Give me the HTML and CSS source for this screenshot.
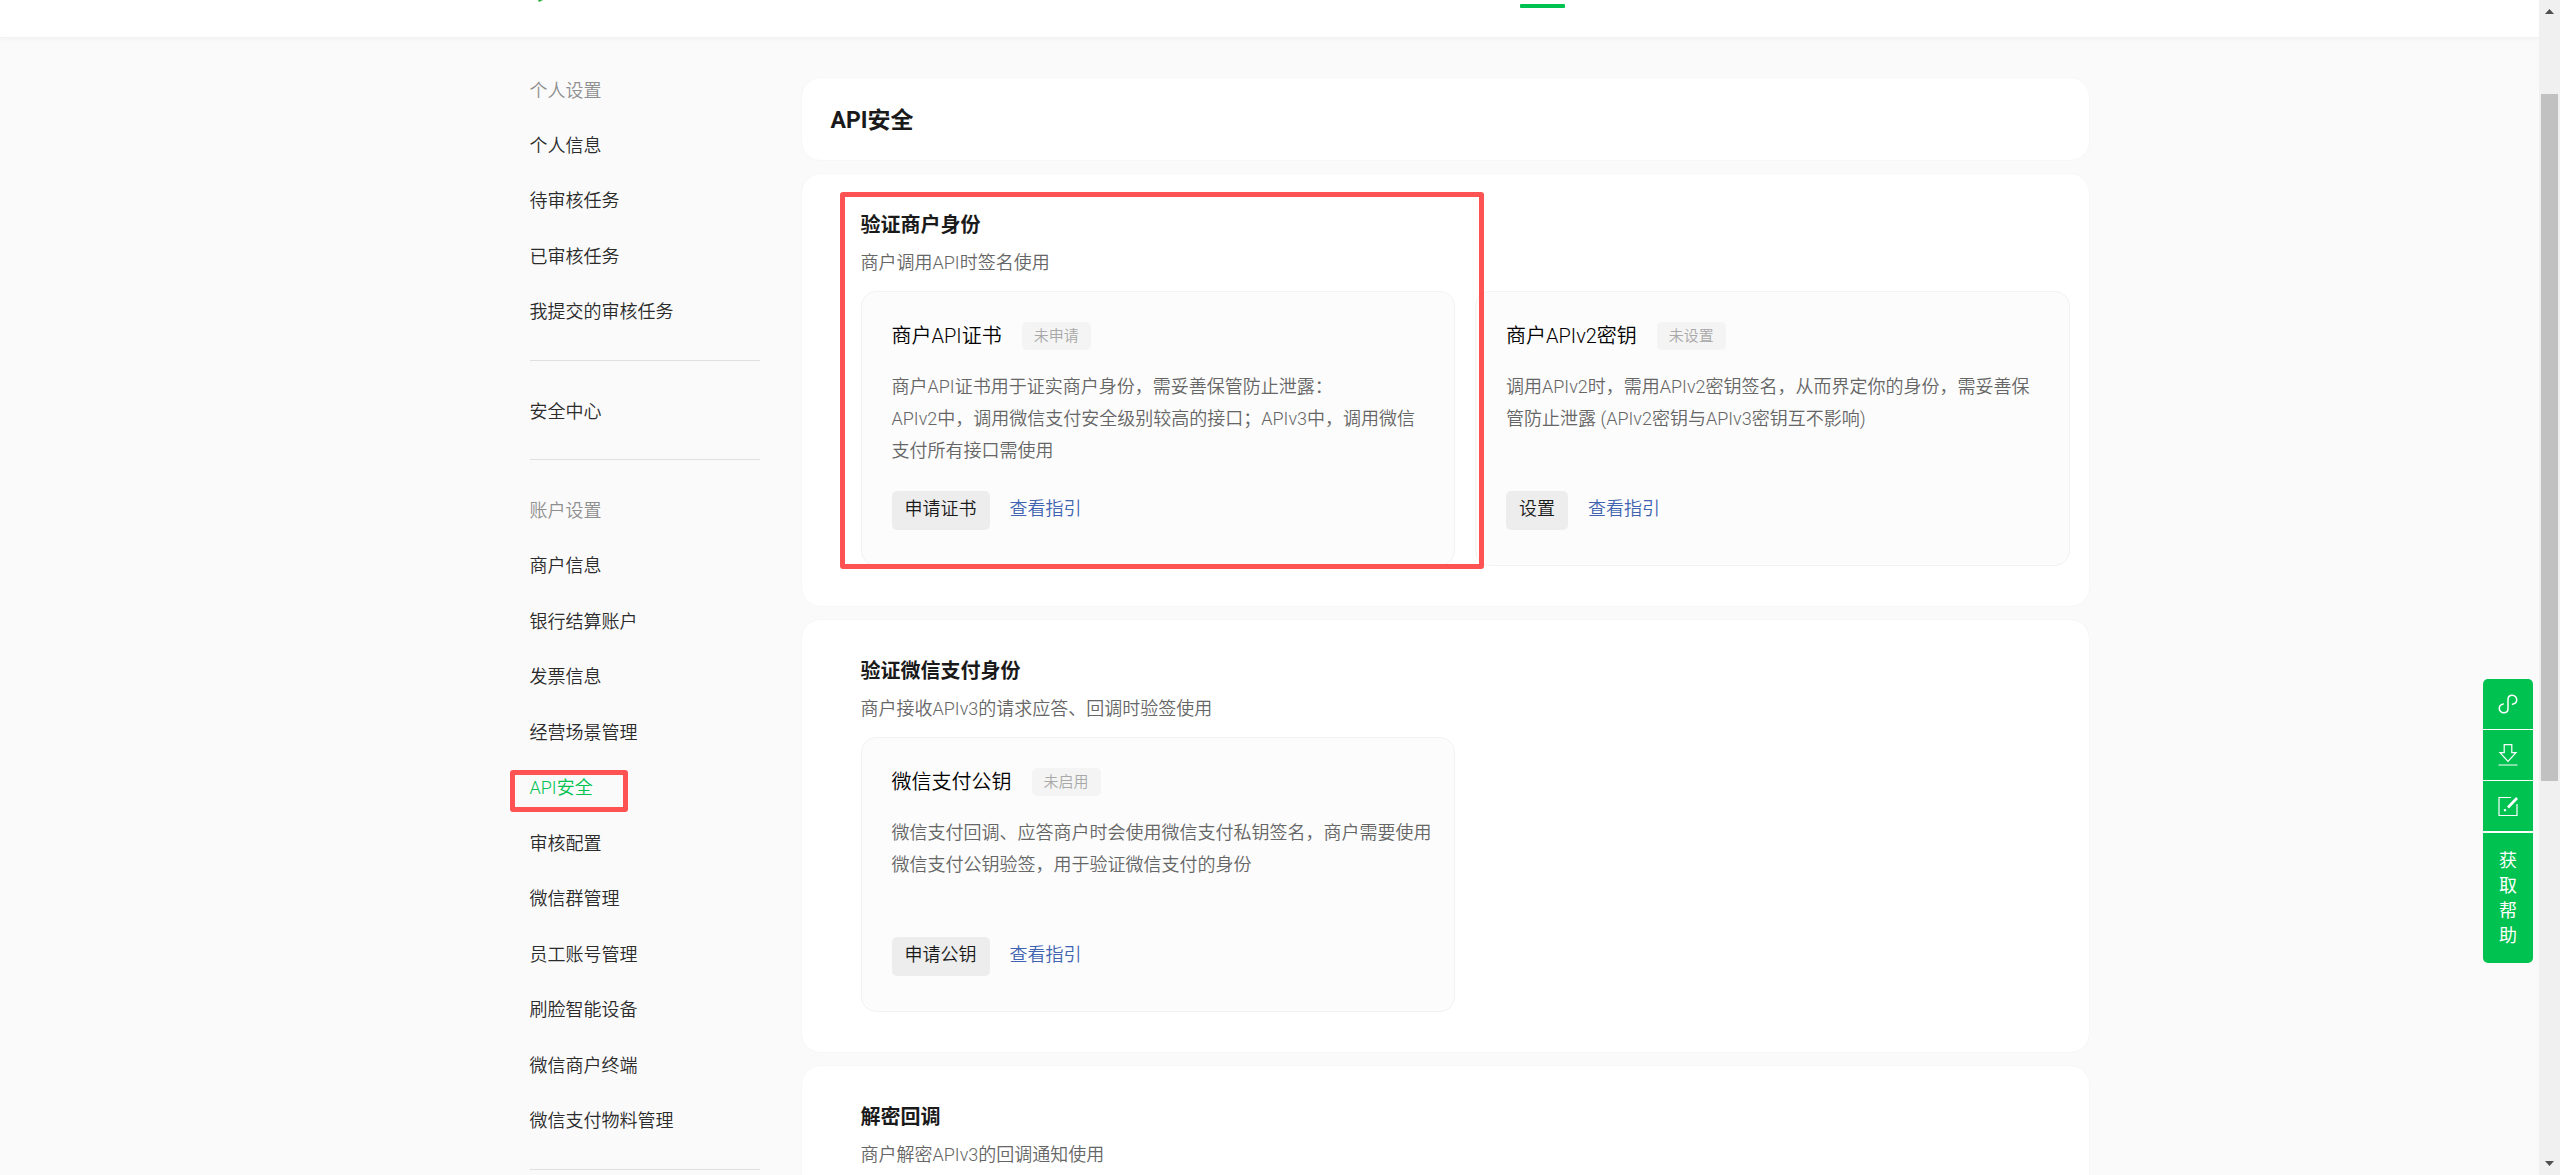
FILE: index.html
```html
<!DOCTYPE html>
<html lang="zh-CN">
<head>
    <meta charset="UTF-8">
    <meta name="viewport" content="width=device-width, initial-scale=1.0">
    <title>API安全</title>
    <link rel="stylesheet" href="styles.css">
</head>
<body>
    <div class="page">
        <header class="header">
            <div class="header-inner">
                <svg class="logo" width="6" height="3" viewBox="0 0 6 3"><path d="M0 0h5L1 2z" fill="#2aae3c"/></svg>
                <span class="tab-line"></span>
            </div>
        </header>

        <div class="container">
            <nav class="sidebar">
                <ul class="menu menu-personal">
                    <li class="menu-title">个人设置</li>
                    <li><a href="#">个人信息</a></li>
                    <li><a href="#">待审核任务</a></li>
                    <li><a href="#">已审核任务</a></li>
                    <li><a href="#">我提交的审核任务</a></li>
                </ul>
                <hr>
                <ul class="menu">
                    <li><a href="#">安全中心</a></li>
                </ul>
                <hr>
                <ul class="menu menu-account">
                    <li class="menu-title">账户设置</li>
                    <li><a href="#">商户信息</a></li>
                    <li><a href="#">银行结算账户</a></li>
                    <li><a href="#">发票信息</a></li>
                    <li><a href="#">经营场景管理</a></li>
                    <li class="active"><a href="#">API安全</a><span class="mark mark-menu"></span></li>
                    <li><a href="#">审核配置</a></li>
                    <li><a href="#">微信群管理</a></li>
                    <li><a href="#">员工账号管理</a></li>
                    <li><a href="#">刷脸智能设备</a></li>
                    <li><a href="#">微信商户终端</a></li>
                    <li><a href="#">微信支付物料管理</a></li>
                </ul>
                <hr>
            </nav>

            <main class="content">
                <div class="panel panel-title">
                    <h1>API安全</h1>
                </div>

                <section class="panel">
                    <h2>验证商户身份</h2>
                    <p class="sub">商户调用API时签名使用</p>
                    <div class="cards">
                        <div class="card">
                            <div class="card-head">
                                <h3>商户API证书</h3>
                                <span class="badge">未申请</span>
                            </div>
                            <p class="desc">商户API证书用于证实商户身份，需妥善保管防止泄露：<br>APIv2中，调用微信支付安全级别较高的接口；APIv3中，调用微信支付所有接口需使用</p>
                            <div class="actions">
                                <button class="btn" type="button">申请证书</button>
                                <a href="#">查看指引</a>
                            </div>
                        </div>
                        <div class="card">
                            <div class="card-head">
                                <h3>商户APIv2密钥</h3>
                                <span class="badge">未设置</span>
                            </div>
                            <p class="desc">调用APIv2时，需用APIv2密钥签名，从而界定你的身份，需妥善保管防止泄露 (APIv2密钥与APIv3密钥互不影响)</p>
                            <div class="actions">
                                <button class="btn" type="button">设置</button>
                                <a href="#">查看指引</a>
                            </div>
                        </div>
                    </div>
                    <span class="mark mark-section"></span>
                </section>

                <section class="panel">
                    <h2>验证微信支付身份</h2>
                    <p class="sub">商户接收APIv3的请求应答、回调时验签使用</p>
                    <div class="cards">
                        <div class="card">
                            <div class="card-head">
                                <h3>微信支付公钥</h3>
                                <span class="badge">未启用</span>
                            </div>
                            <p class="desc">微信支付回调、应答商户时会使用微信支付私钥签名，商户需要使用微信支付公钥验签，用于验证微信支付的身份</p>
                            <div class="actions">
                                <button class="btn" type="button">申请公钥</button>
                                <a href="#">查看指引</a>
                            </div>
                        </div>
                    </div>
                </section>

                <section class="panel">
                    <h2>解密回调</h2>
                    <p class="sub">商户解密APIv3的回调通知使用</p>
                </section>
            </main>
        </div>
    </div>

    <div class="toolbar">
        <button type="button" aria-label="小程序">
            <svg width="20" height="20" viewBox="0 0 20 20" fill="none" stroke="#fff" stroke-width="1.5" stroke-linecap="round">
                <path d="M14.5 10.2C17 9.8 18.7 8 18.7 5.8 18.7 3.2 16.7 1.2 14.2 1.2S10 3 10 5.5v9C10 17 8.3 18.8 5.8 18.8S1.3 16.8 1.3 14.4C1.3 12.2 3 10.3 5.3 9.9"/>
            </svg>
        </button>
        <button type="button" aria-label="下载">
            <svg width="20" height="24" viewBox="0 0 20 24" fill="none" stroke="#fff" stroke-width="1.2">
                <path d="M6.2 1.6h7.6v8H18L10 18.4 2 9.6h4.2z"/>
                <path d="M.5 22h19"/>
            </svg>
        </button>
        <button type="button" aria-label="反馈">
            <svg width="20" height="20" viewBox="0 0 20 20" fill="none" stroke="#fff" stroke-width="1.2">
                <path d="M13 1.5H1v18h18V8"/>
                <path d="M10 11.5L19 2" stroke-width="2.6"/>
                <path d="M6 14.6l2-.8" stroke-width="2.2"/>
            </svg>
        </button>
        <button class="help" type="button">获取帮助</button>
    </div>

    <div class="scrollbar">
        <svg width="9" height="5" viewBox="0 0 9 5"><path d="M0 5L4.5 0 9 5z" fill="#505050"/></svg>
        <div class="track"><div class="thumb"></div></div>
        <svg width="9" height="5" viewBox="0 0 9 5"><path d="M0 0L4.5 5 9 0z" fill="#505050"/></svg>
    </div>
</body>
</html>
```
FILE: styles.css
```css
* {
    box-sizing: border-box;
}

body {
    display: flex;
    height: 100vh;
    margin: 0;
    overflow: hidden;
    background-color: #fafafa;
    font-family: Roboto, "Noto Sans CJK SC", sans-serif;
    font-size: 18px;
    font-weight: 350;
    color: #333;
}

a {
    text-decoration: none;
}

h1, h2, h3, p, ul {
    margin: 0;
    padding: 0;
}

.page {
    flex: 1;
    min-width: 0;
    overflow: hidden;
}

.header {
    height: 38px;
    background-color: #fff;
    border-bottom: 1px solid #f2f2f2;
    box-shadow: 0 1px 4px rgba(0, 0, 0, 0.04);
}

.header-inner,
.container {
    display: flex;
    max-width: 1640px;
    margin: 0 auto;
}

.header-inner {
    align-items: flex-start;
    padding-left: 88px;
}

.logo {
    display: block;
}

.tab-line {
    width: 45px;
    height: 4px;
    margin: 4px 0 0 976px;
    border-radius: 1px;
    background-color: #00c250;
}

/* left menu */
.sidebar {
    flex: none;
    width: 351px;
    padding: 23px 41px 0 80px;
}

.sidebar hr {
    height: 1px;
    margin: 22px 0 21px;
    border: 0;
    background-color: #e0e0e0;
}

.menu {
    display: grid;
    grid-auto-rows: 1fr;
    min-height: 55px;
    list-style: none;
}

.menu-personal {
    min-height: 277px;
}

.menu-account {
    min-height: 666px;
}

.menu li {
    display: flex;
    align-items: center;
    position: relative;
}

.menu a {
    color: #2b2b2b;
}

.menu .menu-title {
    color: #8f8f8f;
}

.menu .active a {
    color: #00c250;
}

/* right side */
.content {
    flex: 1;
    display: flex;
    flex-direction: column;
    gap: 12px;
    padding-top: 39px;
}

.panel {
    position: relative;
    min-height: 433px;
    padding: 37px 19px 40px 59px;
    background-color: #fff;
    border: 1px solid #f7f7f7;
    border-radius: 20px;
}

.panel-title {
    min-height: 0;
    padding: 27px 29px 23px;
}

h1 {
    font-size: 23px;
    line-height: 32px;
    color: #1a1a1a;
}

h2 {
    font-size: 20px;
    line-height: 28px;
    color: #1a1a1a;
}

.sub {
    margin: 10px 0 14px;
    line-height: 28px;
    color: #666;
}

.cards {
    display: grid;
    grid-template-columns: 1fr 1fr;
    gap: 20px;
}

.card {
    display: flex;
    flex-direction: column;
    min-height: 275px;
    padding: 30px 22px 35px 30px;
    background-color: #fcfcfc;
    border: 1px solid #f2f2f2;
    border-radius: 15px;
}

.card-head {
    display: flex;
    align-items: center;
    gap: 20px;
}

h3 {
    font-size: 20px;
    font-weight: 350;
    line-height: 28px;
    color: #000;
}

.badge {
    padding: 0 12px;
    border-radius: 5px;
    background-color: #f4f4f4;
    font-size: 15px;
    line-height: 28px;
    color: #a8a8a8;
}

.desc {
    margin-top: 21px;
    line-height: 32px;
    color: #666;
}

.actions {
    display: flex;
    align-items: center;
    gap: 20px;
    margin-top: auto;
    line-height: 36px;
}

.actions a {
    padding-bottom: 3px;
    color: #3f63b0;
}

.btn {
    height: 39px;
    padding: 0 13px 3px;
    border: none;
    border-radius: 5px;
    background-color: #ededed;
    font: inherit;
    color: #1a1a1a;
    cursor: pointer;
}

/* red frames */
.mark {
    position: absolute;
    border: 5px solid #ff5252;
    border-radius: 3px;
    pointer-events: none;
}

.mark-menu {
    top: 11px;
    left: -20px;
    width: 118px;
    height: 42px;
}

.mark-section {
    top: 18px;
    left: 38px;
    width: 644px;
    height: 377px;
}

/* floating buttons */
.toolbar {
    position: fixed;
    right: 27px;
    bottom: 212px;
    display: flex;
    flex-direction: column;
    gap: 1px;
    width: 50px;
    border-radius: 5px;
    background-color: #fff;
    overflow: hidden;
}

.toolbar button {
    display: flex;
    align-items: center;
    justify-content: center;
    height: 50px;
    padding: 0;
    border: none;
    background-color: #00c250;
    cursor: pointer;
}

.toolbar .help {
    height: 130px;
    margin-top: 1px;
    padding: 0 16px;
    font: inherit;
    font-weight: 400;
    line-height: 25px;
    color: #fff;
}

.scrollbar {
    flex: none;
    display: flex;
    flex-direction: column;
    align-items: center;
    width: 21px;
    padding: 9px 0;
    background-color: #f0f0f0;
}

.track {
    flex: 1;
    padding-top: 80px;
}

.thumb {
    width: 17px;
    height: 687px;
    background-color: #c1c1c1;
}
```
